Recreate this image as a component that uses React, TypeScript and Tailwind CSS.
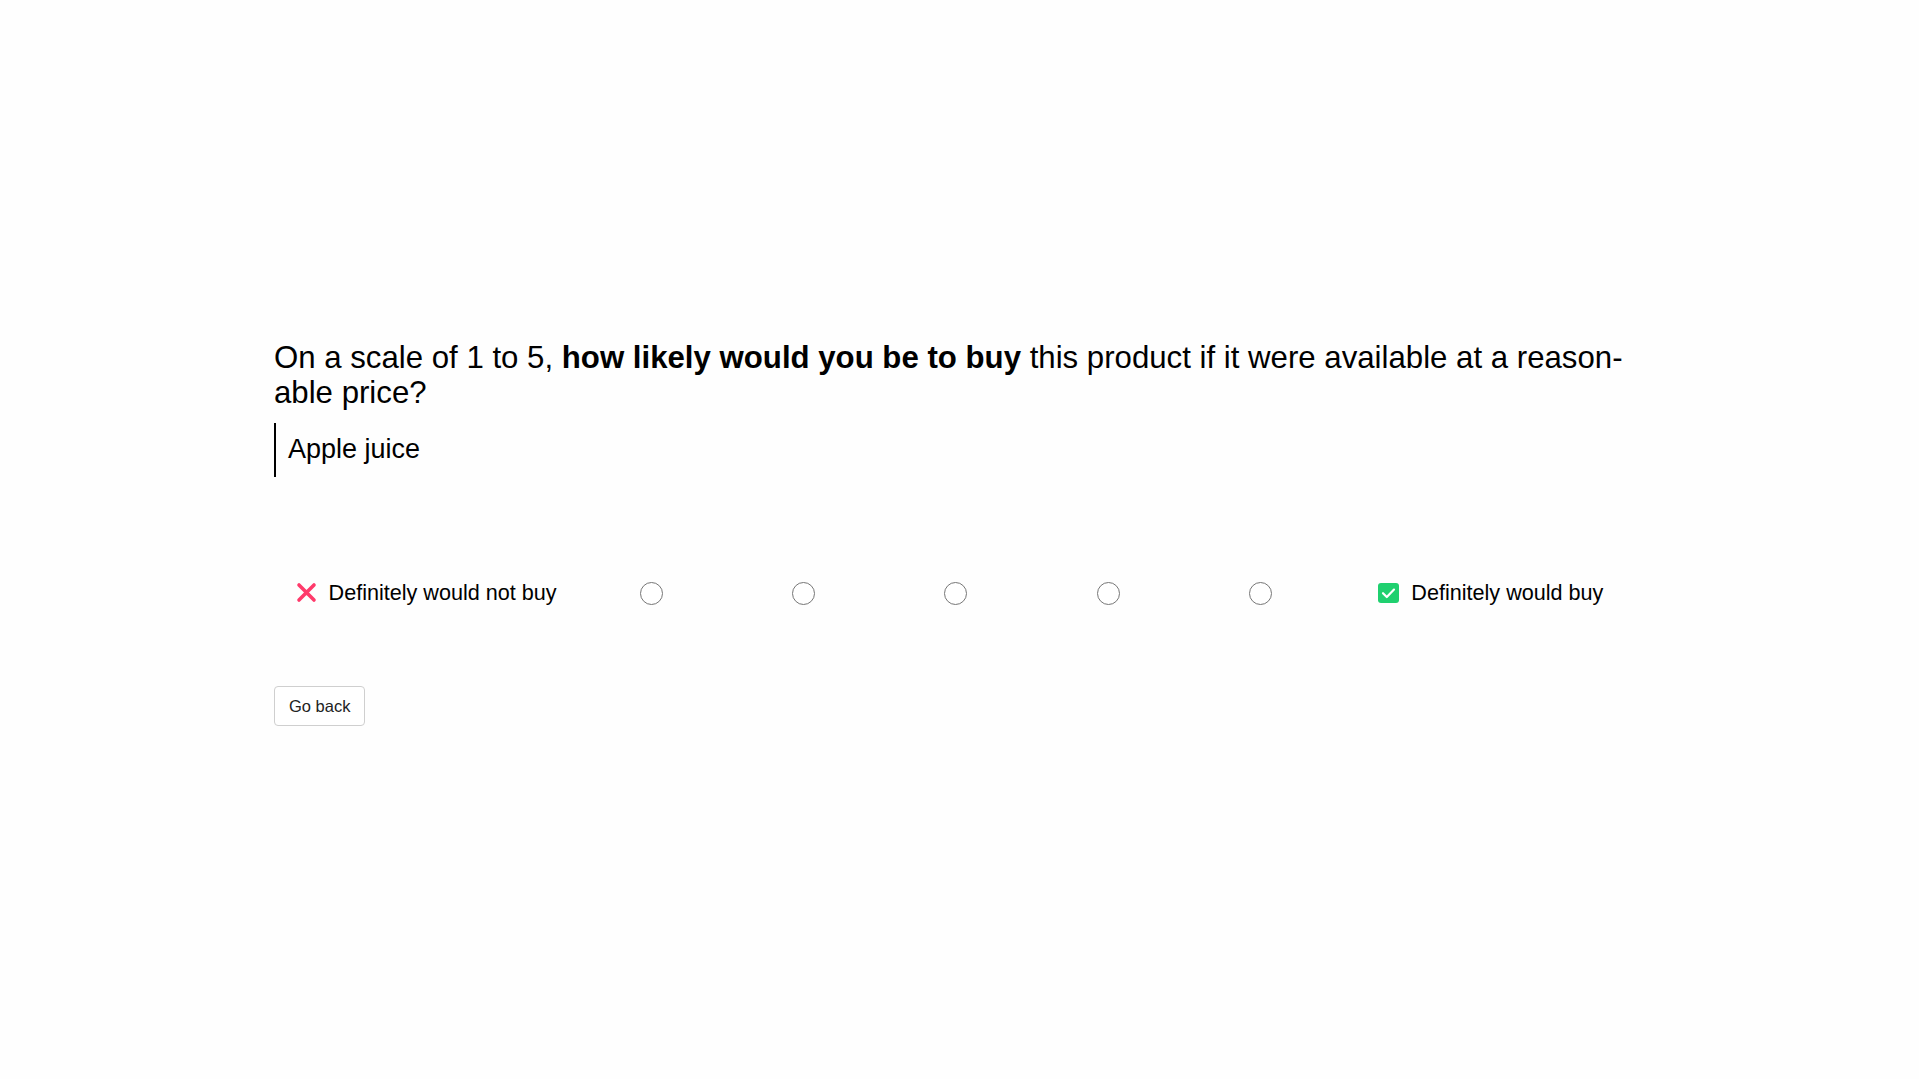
import React from "react";

const font = { fontFamily: '"Liberation Sans", Arial, sans-serif' };

const CrossIcon = () => (
  <svg width="21" height="21" viewBox="0 0 21 21" aria-hidden="true">
    <path d="M3 3 L18 18 M18 3 L3 18" stroke="#ff3a6b" strokeWidth="3.6" strokeLinecap="round" fill="none" />
  </svg>
);

const CheckIcon = () => (
  <svg width="21" height="20" viewBox="0 0 21 20" aria-hidden="true">
    <rect x="0" y="0" width="21" height="20" rx="3" fill="#1fd06f" />
    <path d="M5 10.2 L8.8 14 L16 6.6" stroke="#ffffff" strokeWidth="2.2" strokeLinecap="round" strokeLinejoin="round" fill="none" />
  </svg>
);

export default function App() {
  const options = [1, 2, 3, 4, 5];

  return (
    <div className="min-h-screen w-full bg-[#fefefe] text-black" style={font}>
      <main className="mx-auto w-[1371px] pt-[340px]">
        <h1 className="text-[31.2px] leading-[35px] font-normal">
          On a scale of 1 to 5, <strong className="font-bold">how likely would you be to buy</strong> this product if it
          were available at a reason{"\u00AD"}able price?
        </h1>

        <div className="mt-[13px] border-l-2 border-black pl-[12px] pt-[10px] pb-[12px] text-[27px] leading-[32px]">
          Apple juice
        </div>

        <div className="mt-[96px] grid h-[40px] w-[1369px] grid-cols-[2fr_1fr_1fr_1fr_1fr_1fr_2fr] items-center justify-items-center">
          <div className="flex items-center gap-[12px] text-[21.6px]">
            <CrossIcon />
            <span>Definitely would not buy</span>
          </div>
          {options.map((n) => (
            <label key={n} className="mr-[5px] flex items-center justify-center">
              <input
                type="radio"
                name="likelihood"
                value={n}
                aria-label={`${n}`}
                className="h-[23px] w-[23px] appearance-none rounded-full border border-[#767676] bg-white"
              />
            </label>
          ))}
          <div className="flex items-center gap-[12px] text-[21.6px]">
            <CheckIcon />
            <span>Definitely would buy</span>
          </div>
        </div>

        <button className="mt-[73px] h-[40px] rounded-[4px] border border-[#cfcfcf] bg-white px-[14px] text-[16.5px] text-[#222]">
          Go back
        </button>
      </main>
    </div>
  );
}
